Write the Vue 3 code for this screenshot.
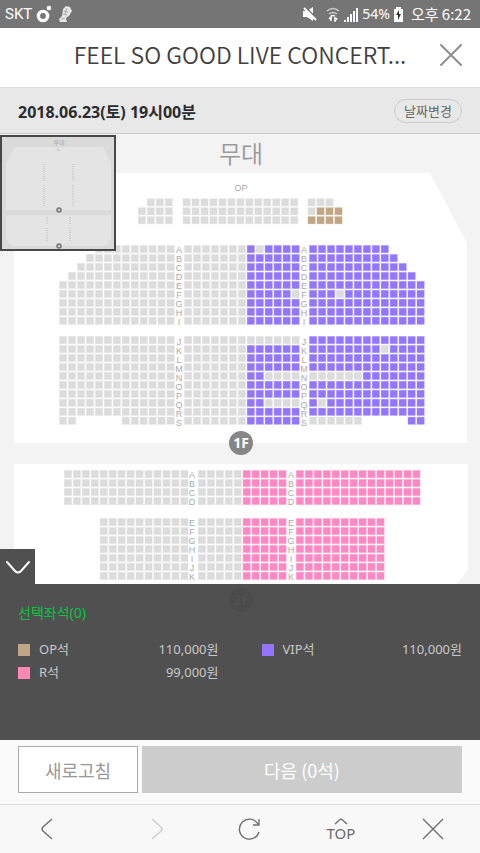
<template>
    <div class="page">
        <div class="status">
            <div class="status-side">
                <span class="status-carrier">SKT</span>
                <svg width="16" height="18" viewBox="0 0 16 18">
                    <circle cx="7" cy="11" r="4.6" fill="none" stroke="#fff" stroke-width="3.4" />
                    <circle cx="13" cy="3" r="2.3" fill="#fff" />
                </svg>
                <svg class="status-shoe" width="14" height="18" viewBox="0 0 14 18">
                    <path d="M8 1l4 1 2 4-3 5-2 1-1 2 1 3H2l-1-3 3-3 1-7z" fill="#e6e6e6" />
                    <path d="M6 6l4 1M5 9l4 1M3 14l4-1M9 3l-2 6" stroke="#aaa" stroke-width="1" fill="none" />
                </svg>
            </div>
            <div class="status-side">
                <svg width="16" height="16" viewBox="0 0 16 16">
                    <path d="M1 5h4l6-4v14l-6-4H1z" fill="#fff" />
                    <path d="M3 1l12 12" stroke="#757575" stroke-width="2" />
                    <path d="M2 2l12 12" stroke="#fff" stroke-width="2" />
                </svg>
                <svg class="status-wifi" width="14" height="16" viewBox="0 0 14 16">
                    <path d="M1 5q6-5 12 0M3 8q4-3 8 0" fill="none" stroke="#ccc" stroke-width="1.5" />
                    <path d="M5 10q2-1 4 0" fill="none" stroke="#fff" stroke-width="1.5" />
                    <path d="M3 13l2-2v4M11 12l-2 3v-4" fill="none" stroke="#fff" stroke-width="1.5" />
                </svg>
                <svg class="status-signal" width="14" height="15" viewBox="0 0 14 15">
                    <path d="M1 13v2M4 10v5M7 7v8M10 4v11M13 1v14" stroke="#fff" stroke-width="2" />
                </svg>
                <span class="status-battery">54%</span>
                <svg width="9" height="15" viewBox="0 0 9 15">
                    <path d="M0 2h2V0h5v2h2v13H0z" fill="#fff" />
                    <path d="M5 3L2 8h2v5l3-6H5z" fill="#333" />
                </svg>
                <span class="status-time">오후 6:22</span>
            </div>
        </div>

        <header class="header">
            <h1 class="header-title">FEEL SO GOOD LIVE CONCERT...</h1>
            <button class="header-close" aria-label="닫기">
                <svg width="22" height="22" viewBox="0 0 22 22">
                    <path d="M1 1l20 20M21 1L1 21" stroke="#8f8f8f" stroke-width="2" stroke-linecap="round" />
                </svg>
            </button>
        </header>

        <div class="date">
            <span class="date-text">2018.06.23(토) 19시00분</span>
            <button class="date-change">날짜변경</button>
        </div>

        <main class="map">
            <svg class="map-canvas" viewBox="0 0 480 606">
                <path d="M51 39H430L467 109V309H14V109z" fill="#fff" />
                <path d="M14 330H468V436L442 468H40L14 436z" fill="#fff" />
                <text class="map-stage" x="241" y="29">무대</text>
                <text class="map-label" x="241" y="57">OP</text>

                <g v-for="(block, b) in blocks" :key="b">
                    <rect
                        v-for="seat in seatsOf(block)"
                        :key="seat.id"
                        class="seat"
                        :class="'seat_' + seat.type"
                        :x="seat.x"
                        :y="seat.y"
                        width="7.2"
                        height="7.2"
                    />
                </g>

                <g v-for="(row, r) in labels" :key="'l' + r">
                    <text
                        v-for="(letter, i) in row.letters"
                        :key="letter"
                        class="map-label"
                        :x="row.x"
                        :y="row.y + i * PITCH"
                    >{{ letter }}</text>
                </g>

                <g v-for="floor in floors" :key="floor.name">
                    <circle cx="241" :cy="floor.y" r="12" fill="#868686" />
                    <text class="map-floor" x="241" :y="floor.y + 5">{{ floor.name }}</text>
                </g>
            </svg>

            <div class="minimap">
                <svg width="112" height="112" viewBox="0 0 112 112">
                    <path d="M13 10H101L109 26V73H4V26z" fill="#e4e4e4" />
                    <path d="M4 78H109V102L104 109H9L4 102z" fill="#e4e4e4" />
                    <text class="minimap-stage" x="57" y="8">무대</text>
                    <path d="M55 13h3" stroke="#bbb" />
                    <path
                        d="M42 27v18M42 48v21M71 27v18M71 48v21M45 80v8M45 91v14M68 80v8M68 91v14"
                        stroke="#c6c6c6"
                        stroke-width="1.5"
                        stroke-dasharray="1 1"
                    />
                    <circle cx="57" cy="73" r="2" fill="#ccc" stroke="#777" stroke-width="1.5" />
                    <circle cx="57" cy="109" r="2" fill="#ccc" stroke="#777" stroke-width="1.5" />
                </svg>
            </div>

            <section class="panel">
                <button class="panel-toggle" aria-label="접기" @click="open = !open">
                    <svg width="24" height="14" viewBox="0 0 24 14">
                        <path d="M1 2L9 11Q12 14 15 11L23 2" fill="none" stroke="#fff" stroke-width="2" stroke-linecap="round" />
                    </svg>
                </button>
                <div class="panel-body" v-if="open">
                    <h2 class="panel-title">선택좌석({{ selected }})</h2>
                    <ul class="panel-list">
                        <li v-for="grade in grades" :key="grade.name">
                            <i :class="'swatch_' + grade.type"></i>
                            <span>{{ grade.name }}</span>
                            <b>{{ grade.price.toLocaleString('en-US') }}원</b>
                        </li>
                    </ul>
                </div>
            </section>
        </main>

        <div class="actions">
            <button class="actions-refresh">새로고침</button>
            <button class="actions-next" :disabled="!selected">다음 ({{ selected }}석)</button>
        </div>

        <nav class="nav">
            <button aria-label="뒤로">
                <svg width="36" height="24" viewBox="0 0 36 24">
                    <path d="M23 2L14 10Q12 12 14 14L23 22" />
                </svg>
            </button>
            <button class="nav-forward" aria-label="앞으로">
                <svg width="36" height="24" viewBox="0 0 36 24">
                    <path d="M13 2L22 10Q24 12 22 14L13 22" />
                </svg>
            </button>
            <button aria-label="새로고침">
                <svg width="36" height="24" viewBox="0 0 36 24">
                    <path d="M28 15A10 10 0 1 1 27 7M28 2V8H22" />
                </svg>
            </button>
            <button class="nav-top">
                <svg width="14" height="7" viewBox="0 0 14 7">
                    <path d="M1 6L6 1.500Q7 1 8 1.500L13 6" />
                </svg>
                <span>TOP</span>
            </button>
            <button aria-label="닫기">
                <svg width="36" height="24" viewBox="0 0 36 24">
                    <path d="M8 2L28 22M28 2L8 22" />
                </svg>
            </button>
        </nav>
    </div>
</template>

<script setup>
    import { ref } from 'vue'

    const PITCH = 8.96

    const open = ref(true)
    const selected = ref(0)

    // g - taken, o - OP, v - VIP, r - R, space - no seat
    const blocks = [
        { x: 138.3, y: 64.7, rows: [' ggg', 'gggg', 'gggg'] },
        { x: 183, y: 64.7, rows: Array(3).fill('g'.repeat(13)) },
        { x: 308, y: 64.7, rows: ['ggg', 'gooo', 'oooo'] },
        {
            x: 59.5,
            y: 111.5,
            rows: [4, 3, 2, 1, 0, 0, 0, 0, 0].map((n) => ' '.repeat(n) + 'g'.repeat(13 - n))
        },
        {
            x: 184.5,
            y: 111.5,
            rows: [
                'gggggggvgvvvv',
                'gggggggvvvvvv',
                'gggggggvvvvvv',
                'gggggggvvvvvv',
                'gggggggvvvvvv',
                'gggggggvvvvvg',
                'gggggggvvvvvv',
                'gggggggvvvvvv',
                'gggggggvvvvvv'
            ]
        },
        {
            x: 309.5,
            y: 111.5,
            rows: [
                'vvvvvvvvv',
                'vvvvvvvvvv',
                'vvvvvvvvvvv',
                'vvvvvvvvvvvv',
                'vvvvvvvvvvvvv',
                'vvvgvvvvvvvvv',
                'vvvvvvvvvvvvv',
                'vvvvvvvvvvvvv',
                'vvvvvvvvvvvvv'
            ]
        },
        {
            x: 59.5,
            y: 202.5,
            rows: [...Array(9).fill('g'.repeat(13)), 'gg     gggggg']
        },
        {
            x: 184.5,
            y: 202.5,
            rows: [
                'ggggggggggggg',
                'gggggggvvvvvv',
                'gggggggvvvvvv',
                'gggggggvvvvvv',
                'gggggggvvgggg',
                'gggggggvvvvvv',
                'gggggggvvvvvv',
                'gggggggvvgggg',
                'gggggggvvvvvv',
                'gggggggvvvvvv'
            ]
        },
        {
            x: 309.5,
            y: 202.5,
            rows: [
                'vvvvvvvvvvvvv',
                'vvvvvvvvgvvvv',
                'vvvvvvvvvvvvv',
                'vvvvvvvvvvvvv',
                'ggggggvvvvvvv',
                'vvvvvvvvvvvvv',
                'vvvvvvvvvvvvv',
                'vgvvvvvvvvvvv',
                'vvvvvvvvvvvvv',
                'gggggg     vv'
            ]
        },
        { x: 64.3, y: 336.5, rows: Array(4).fill('g'.repeat(14)) },
        { x: 198.3, y: 336.5, rows: Array(4).fill('gggggrrrrr') },
        { x: 296.3, y: 336.5, rows: Array(4).fill('r'.repeat(14)) },
        { x: 100.2, y: 384.5, rows: Array(7).fill('g'.repeat(10)) },
        { x: 198.3, y: 384.5, rows: Array(7).fill('gggggrrrrr') },
        { x: 296.3, y: 384.5, rows: Array(7).fill('r'.repeat(10)) }
    ]

    const labels = [
        { x: 179, y: 119, letters: 'ABCDEFGHI' },
        { x: 304, y: 119, letters: 'ABCDEFGHI' },
        { x: 179, y: 211, letters: 'JKLMNOPQRS' },
        { x: 304, y: 211, letters: 'JKLMNOPQRS' },
        { x: 192, y: 344, letters: 'ABCD' },
        { x: 291, y: 344, letters: 'ABCD' },
        { x: 192, y: 392, letters: 'EFGHIJK' },
        { x: 291, y: 392, letters: 'EFGHIJK' }
    ].map((row) => ({ ...row, letters: [...row.letters] }))

    const floors = [
        { name: '1F', y: 309 },
        { name: '2F', y: 466 }
    ]

    const grades = [
        { name: 'OP석', type: 'o', price: 110000 },
        { name: 'VIP석', type: 'v', price: 110000 },
        { name: 'R석', type: 'r', price: 99000 }
    ]

    function seatsOf(block) {
        return block.rows.flatMap((row, r) =>
            [...row]
                .map((type, c) => ({
                    id: r + '-' + c,
                    type,
                    x: block.x + c * PITCH,
                    y: block.y + r * PITCH
                }))
                .filter((seat) => seat.type !== ' ')
        )
    }
</script>

<style>
    body {
        margin: 0;
        background-color: #f3f3f3;
    }
</style>

<style scoped>
    .page {
        width: 100%;
        min-height: 100vh;
        display: flex;
        flex-direction: column;
        font-family: "Noto Sans", "Noto Sans CJK KR", sans-serif;
    }

    button {
        margin: 0;
        padding: 0;
        border: none;
        background: none;
        font-family: inherit;
        cursor: pointer;
    }

    svg {
        display: block;
    }

    .status {
        height: 28px;
        padding: 0 9px 0 5px;
        display: flex;
        justify-content: space-between;
        align-items: center;
        background-color: #757575;
        color: #fff;
        font-size: 15px;
        line-height: 28px;
    }

    .status-side {
        display: flex;
        align-items: center;
        gap: 4px;
    }

    .status-carrier {
        font-family: Roboto, sans-serif;
    }

    .status-shoe {
        margin-left: 2px;
    }

    .status-wifi {
        margin-left: 4px;
    }

    .status-battery {
        font-size: 14px;
    }

    .status-time {
        margin-left: 4px;
        font-family: "Noto Sans CJK KR", sans-serif;
    }

    .header {
        height: 59px;
        box-sizing: border-box;
        padding: 0 18px 6px;
        display: flex;
        justify-content: flex-end;
        align-items: center;
        background-color: #fff;
    }

    .header-title {
        flex: 1;
        margin: 0;
        padding: 0 0 2px 22px;
        color: #404040;
        font-family: "Noto Sans CJK KR", sans-serif;
        font-size: 23px;
        font-weight: 350;
        line-height: 32px;
        text-align: center;
        white-space: nowrap;
    }

    .date {
        height: 47px;
        box-sizing: border-box;
        padding: 0 18px;
        display: flex;
        justify-content: space-between;
        align-items: center;
        border-top: 1px solid #ddd;
        border-bottom: 1px solid #ccc;
        background-color: #e8e8e8;
    }

    .date-text {
        color: #2c2c2c;
        font-size: 16px;
        font-weight: 700;
    }

    .date-change {
        width: 68px;
        height: 24px;
        border: 1px solid #c8c8c8;
        border-radius: 12px;
        color: #666;
        font-size: 13px;
        line-height: 22px;
    }

    .map {
        flex: 1;
        position: relative;
        overflow: hidden;
        background-color: #f3f3f3;
    }

    .map-canvas {
        width: 100%;
        height: auto;
    }

    .map-canvas text {
        text-anchor: middle;
    }

    .map-stage {
        fill: #999;
        font-family: "Noto Sans CJK KR", sans-serif;
        font-size: 24px;
        font-weight: 350;
    }

    .map-label {
        fill: #aaa;
        font-family: "Liberation Sans", sans-serif;
        font-size: 9px;
    }

    .map-floor {
        fill: #fff;
        font-size: 14px;
        font-weight: 700;
    }

    .seat {
        stroke-width: 1;
        stroke-opacity: 0.3;
    }

    .seat_g {
        fill: #dcdcdc;
        stroke: #dcdcdc;
    }

    .seat_o {
        fill: #bfa785;
        stroke: #bfa785;
    }

    .seat_v {
        fill: #9277fd;
        stroke: #9277fd;
    }

    .seat_r {
        fill: #ff88c3;
        stroke: #ff88c3;
    }

    .minimap {
        position: absolute;
        top: 1px;
        left: 0;
        border: 2px solid #484848;
        background-color: #dadada;
    }

    .minimap-stage {
        fill: #aaa;
        font-size: 6px;
        text-anchor: middle;
    }

    .panel {
        position: absolute;
        left: 0;
        right: 0;
        bottom: 0;
    }

    .panel-toggle {
        width: 35px;
        height: 35px;
        display: flex;
        justify-content: center;
        align-items: center;
        background-color: rgba(73, 73, 73, 0.96);
    }

    .panel-body {
        height: 156px;
        box-sizing: border-box;
        padding: 19px 18px 0;
        background-color: rgba(73, 73, 73, 0.96);
    }

    .panel-title {
        margin: 0 0 15px;
        color: #06c443;
        font-size: 14px;
        font-weight: 400;
        line-height: 20px;
    }

    .panel-list {
        margin: 0;
        padding: 0;
        display: grid;
        grid-template-columns: 1fr 1fr;
        column-gap: 43px;
        list-style: none;
        color: #c8c8c8;
        font-size: 13px;
        line-height: 23px;
    }

    .panel-list li {
        display: flex;
        align-items: center;
        gap: 9px;
    }

    .panel-list i {
        width: 12px;
        height: 12px;
    }

    .panel-list b {
        margin-left: auto;
        font-weight: 400;
    }

    .swatch_o {
        background-color: #bfa785;
    }

    .swatch_v {
        background-color: #9277fd;
    }

    .swatch_r {
        background-color: #ff88b3;
    }

    .actions {
        padding: 6px 18px 11px;
        display: flex;
        gap: 4px;
        background-color: #fafafa;
    }

    .actions button {
        height: 47px;
        font-family: "Noto Sans CJK KR", sans-serif;
        font-size: 18px;
    }

    .actions-refresh {
        width: 120px;
        border: 1px solid #aaa;
        background-color: #fff;
        color: #999;
    }

    .actions-next {
        flex: 1;
        background-color: #ccc;
        color: #fff;
    }

    .nav {
        height: 49px;
        box-sizing: border-box;
        padding: 0 29px;
        display: flex;
        justify-content: space-between;
        align-items: center;
        border-top: 1px solid #ddd;
        background-color: #f8f8f8;
    }

    .nav button {
        width: 36px;
        display: flex;
        flex-direction: column;
        align-items: center;
    }

    .nav path {
        fill: none;
        stroke: #6b6b6b;
        stroke-width: 1.300;
    }

    .nav .nav-forward {
        width: 54px;
        align-items: flex-end;
    }

    .nav .nav-forward path {
        stroke: #ccc;
    }

    .nav-top {
        color: #6b6b6b;
        font-size: 15px;
        line-height: 16px;
    }
</style>
